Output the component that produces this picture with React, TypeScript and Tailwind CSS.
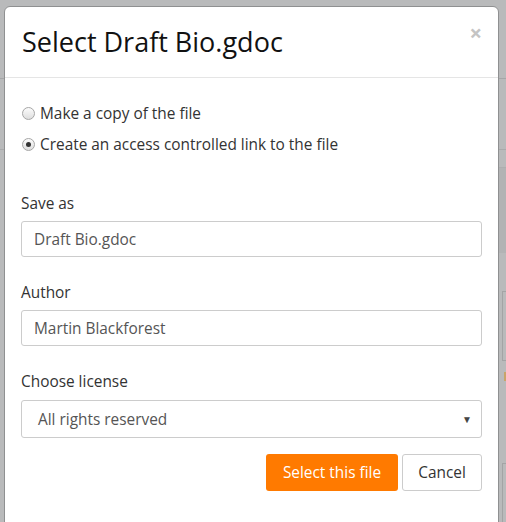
import React from "react";

const font = { fontFamily: '"Open Sans", "Noto Sans", sans-serif' };

function Radio({ checked }: { checked?: boolean }) {
  return (
    <span className="w-[13px] h-[13px] rounded-full border border-[#a6a6a6] bg-gradient-to-b from-[#fcfcfc] to-[#dedede] flex items-center justify-center shrink-0">
      {checked && <span className="w-[5px] h-[5px] rounded-full bg-[#333]" />}
    </span>
  );
}

function Field({ label, value, className }: { label: string; value: string; className: string }) {
  return (
    <div className={className}>
      <div className="text-[15.4px] leading-5 text-[#333] pt-[1px] h-5">{label}</div>
      <div className="mt-2 h-9 border border-[#cccccc] rounded-[3px] px-3 pt-[2px] flex items-center text-[15.4px] text-[#555]">
        {value}
      </div>
    </div>
  );
}

export default function App() {
  return (
    <div className="relative w-[506px] h-[522px] overflow-hidden bg-[#b9babb]" style={font}>
      {/* page behind the backdrop */}
      <div className="flex flex-col pt-[78px]">
        <div className="border-t border-[#a5a6a7] h-[71px]" />
        <div className="border-t border-[#a9aaab] flex justify-end">
          <div className="w-[8px] mt-[17px] h-[86px] bg-[#b2b3b4] border-t border-[#adaeaf]" />
        </div>
        <div className="flex justify-end">
          <div className="w-[4px] mt-[38px] h-[70px] border border-r-0 border-[#a3a4a5]" />
        </div>
        <div className="flex justify-end">
          <div className="w-[2px] mt-[11px] h-[9px] bg-[#c9a46a]" />
        </div>
        <div className="flex justify-end">
          <div className="w-[4px] mt-[82px] h-[70px] border border-r-0 border-[#a3a4a5]" />
        </div>
      </div>

      {/* modal */}
      <div className="absolute left-[4px] top-[6px] w-[495px] h-[540px] bg-white border border-[#8f9091] rounded-[6px]">
        <div className="relative h-[71px] border-b border-[#e5e5e5] flex items-center px-[17px]">
          <h4 className="text-[27px] leading-none text-[#111] pb-[1px]">Select Draft Bio.gdoc</h4>
          <span className="absolute right-[16px] top-[14px] text-[22px] font-bold leading-none text-[#c4c4c4]">×</span>
        </div>

        <div className="px-4 pt-[25px]">
          <label className="flex items-center gap-[5px] h-5 text-[15.4px] text-[#333]">
            <span className="ml-[1px]"><Radio /></span>
            <span className="pt-[2px]">Make a copy of the file</span>
          </label>
          <label className="flex items-center gap-[5px] h-5 mt-[11px] text-[15.4px] text-[#333]">
            <span className="ml-[1px]"><Radio checked /></span>
            <span className="pt-[2px]">Create an access controlled link to the file</span>
          </label>

          <Field className="mt-[39px]" label="Save as" value="Draft Bio.gdoc" />
          <Field className="mt-[25px]" label="Author" value="Martin Blackforest" />

          <div className="mt-[25px]">
            <div className="text-[15.4px] leading-5 text-[#333] pt-[1px] h-5">Choose license</div>
            <div className="mt-[9px] h-[38px] border border-[#cccccc] rounded-[3px] pl-4 pr-[9px] flex items-center justify-between text-[15.4px] text-[#555]">
              <span className="pt-[2px]">All rights reserved</span>
              <span className="text-[10px] text-[#444]">▼</span>
            </div>
          </div>

          <div className="mt-4 flex justify-end gap-[4px]">
            <button className="h-[37px] w-[132px] rounded-[3px] bg-[#ff7a00] text-white text-[15.4px] pt-[1px]">Select this file</button>
            <button className="h-[37px] w-[80px] rounded-[3px] border border-[#cccccc] bg-white text-[#333] text-[15.4px] pt-[1px]">Cancel</button>
          </div>
        </div>
      </div>
    </div>
  );
}
